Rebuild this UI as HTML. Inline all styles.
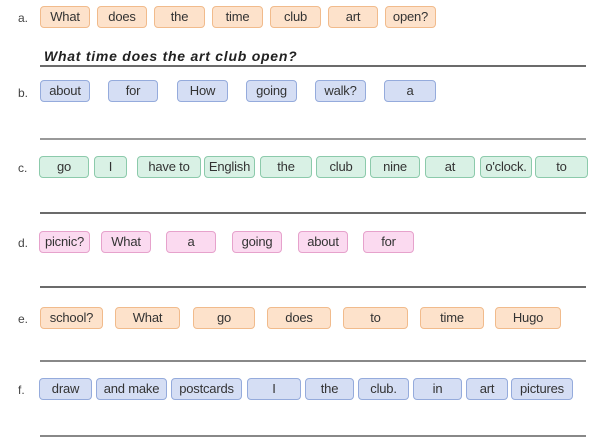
<!DOCTYPE html>
<html><head><meta charset="utf-8"><style>
body{margin:0;width:603px;height:447px;background:#fff;position:relative;overflow:hidden;font-family:"Liberation Sans",sans-serif;}
.b{position:absolute;box-sizing:border-box;height:22px;border-radius:4px;border:1.5px solid;font-size:13px;line-height:19px;text-align:center;color:#333;white-space:nowrap;letter-spacing:-0.2px}
.o{background:#fde2cb;border-color:#f1bb8c}
.u{background:#d5def4;border-color:#95abdc}
.g{background:#d9f1e5;border-color:#8ccaab}
.p{background:#fbdaf0;border-color:#e6a2cc}
.l{position:absolute;left:18px;font-size:12px;color:#444}
.ln{position:absolute;left:40px;width:546px;height:2px;background:#6b6b6b}
</style></head><body>
<div class="l" style="top:11px">a.</div>
<div class="b o" style="left:40px;top:6px;width:50px">What</div>
<div class="b o" style="left:97px;top:6px;width:50px">does</div>
<div class="b o" style="left:154px;top:6px;width:51px">the</div>
<div class="b o" style="left:212px;top:6px;width:51px">time</div>
<div class="b o" style="left:270px;top:6px;width:51px">club</div>
<div class="b o" style="left:328px;top:6px;width:50px">art</div>
<div class="b o" style="left:385px;top:6px;width:51px">open?</div>
<div style="position:absolute;left:44px;top:48px;font:italic bold 14px 'Liberation Sans',sans-serif;letter-spacing:0.75px;color:#222">What time does the art club open?</div>
<div class="ln" style="top:65px;height:1.5px"></div>

<div class="l" style="top:86px">b.</div>
<div class="b u" style="left:40px;top:80px;width:50px">about</div>
<div class="b u" style="left:108px;top:80px;width:50px">for</div>
<div class="b u" style="left:177px;top:80px;width:51px">How</div>
<div class="b u" style="left:246px;top:80px;width:51px">going</div>
<div class="b u" style="left:315px;top:80px;width:51px">walk?</div>
<div class="b u" style="left:384px;top:80px;width:52px">a</div>
<div class="ln" style="top:138px;background:#999"></div>

<div class="l" style="top:161px">c.</div>
<div class="b g" style="left:39px;top:156px;width:50px">go</div>
<div class="b g" style="left:94px;top:156px;width:33px">I</div>
<div class="b g" style="left:137px;top:156px;width:64px">have to</div>
<div class="b g" style="left:204px;top:156px;width:51px">English</div>
<div class="b g" style="left:260px;top:156px;width:52px">the</div>
<div class="b g" style="left:316px;top:156px;width:50px">club</div>
<div class="b g" style="left:370px;top:156px;width:50px">nine</div>
<div class="b g" style="left:425px;top:156px;width:50px">at</div>
<div class="b g" style="left:480px;top:156px;width:52px">o'clock.</div>
<div class="b g" style="left:535px;top:156px;width:53px">to</div>
<div class="ln" style="top:212px"></div>

<div class="l" style="top:236px">d.</div>
<div class="b p" style="left:39px;top:231px;width:51px">picnic?</div>
<div class="b p" style="left:101px;top:231px;width:50px">What</div>
<div class="b p" style="left:166px;top:231px;width:50px">a</div>
<div class="b p" style="left:232px;top:231px;width:50px">going</div>
<div class="b p" style="left:298px;top:231px;width:50px">about</div>
<div class="b p" style="left:363px;top:231px;width:51px">for</div>
<div class="ln" style="top:286px"></div>

<div class="l" style="top:312px">e.</div>
<div class="b o" style="left:40px;top:307px;width:63px">school?</div>
<div class="b o" style="left:115px;top:307px;width:65px">What</div>
<div class="b o" style="left:193px;top:307px;width:62px">go</div>
<div class="b o" style="left:267px;top:307px;width:64px">does</div>
<div class="b o" style="left:343px;top:307px;width:65px">to</div>
<div class="b o" style="left:420px;top:307px;width:64px">time</div>
<div class="b o" style="left:495px;top:307px;width:66px">Hugo</div>
<div class="ln" style="top:360px;background:#888"></div>

<div class="l" style="top:383px">f.</div>
<div class="b u" style="left:39px;top:378px;width:53px">draw</div>
<div class="b u" style="left:96px;top:378px;width:71px">and make</div>
<div class="b u" style="left:171px;top:378px;width:71px">postcards</div>
<div class="b u" style="left:247px;top:378px;width:54px">I</div>
<div class="b u" style="left:305px;top:378px;width:49px">the</div>
<div class="b u" style="left:358px;top:378px;width:51px">club.</div>
<div class="b u" style="left:413px;top:378px;width:49px">in</div>
<div class="b u" style="left:466px;top:378px;width:42px">art</div>
<div class="b u" style="left:511px;top:378px;width:62px">pictures</div>
<div class="ln" style="top:435px;background:#888"></div>
</body></html>
